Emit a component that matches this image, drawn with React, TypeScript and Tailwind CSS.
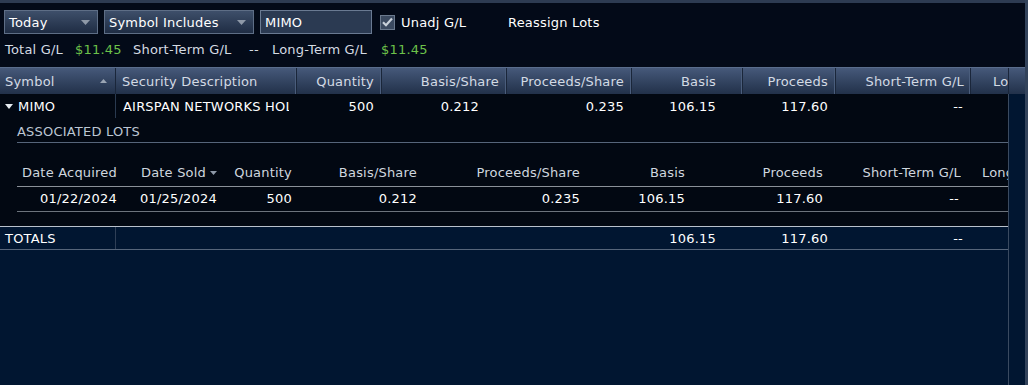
import React from "react";

const F = "[font-family:'DejaVu_Sans',sans-serif] text-[13px] tracking-[0.2px]";

function HeadCell({ w, children, align = "right", pr = "pr-[7px]", last = false }: { w: string; children?: React.ReactNode; align?: "left" | "right"; pr?: string; last?: boolean }) {
  return (
    <div
      className={`${w} h-full flex items-center shrink-0 overflow-hidden whitespace-nowrap ${align === "right" ? "justify-end " + pr : "justify-start pl-[6px]"} ${last ? "" : "border-r border-r-[#1a263a] shadow-[inset_-2px_0_0_-1px_#4a5d7c]"}`}
    >
      {children}
    </div>
  );
}

function Cell({ w, children, right = true, pr = "pr-[8px]", pl = "pl-0", extra = "" }: { w: string; children?: React.ReactNode; right?: boolean; pr?: string; pl?: string; extra?: string }) {
  return (
    <div className={`${w} shrink-0 flex items-center overflow-hidden whitespace-nowrap ${right ? "justify-end " + pr : "justify-start " + pl} ${extra}`}>
      {children}
    </div>
  );
}

function Dropdown({ w, label }: { w: string; label: string }) {
  return (
    <div className={`${w} h-[24px] border border-[#5e6e86] bg-gradient-to-b from-[#3e4f6a] to-[#1f2d44] flex items-center justify-between pl-[4px] pr-[7px] text-white`}>
      <span>{label}</span>
      <svg width="9" height="5" viewBox="0 0 9 5"><path d="M0 0h9L4.5 5z" fill="#8e99a8" /></svg>
    </div>
  );
}

export default function App() {
  return (
    <div className={`w-[1028px] h-[385px] flex bg-[#011631] ${F} leading-none`}>
      <div className="w-[1025px] flex flex-col">
        <div className="h-[3px] bg-[#2d3b52]" />
        {/* toolbar */}
        <div className="h-[64px] bg-[#030a18] flex flex-col">
          <div className="pt-[7px] pl-[4px] flex items-center h-[31px]">
            <Dropdown w="w-[94px]" label="Today" />
            <div className="w-[6px]" />
            <Dropdown w="w-[150px]" label="Symbol Includes" />
            <div className="w-[6px]" />
            <div className="w-[112px] h-[24px] border border-[#6a7a92] bg-[#2b3a52] flex items-center pl-[4px] text-white">MIMO</div>
            <div className="w-[8px]" />
            <div className="w-[15px] h-[15px] border border-[#6b7a8e] bg-[#3b4a60] flex items-center justify-center">
              <svg width="11" height="10" viewBox="0 0 11 10"><path d="M1 5.2l3 3L10 1.5" stroke="#c9d1da" strokeWidth="2.2" fill="none" /></svg>
            </div>
            <span className="ml-[6px] w-[107px] text-white whitespace-nowrap">Unadj G/L</span>
            <span className="text-white whitespace-nowrap">Reassign Lots</span>
          </div>
          <div className="h-[18px] mt-[6px] pl-[5px] flex items-center text-[#d5dbe3] whitespace-nowrap">
            <span className="w-[70px] shrink-0">Total G/L</span>
            <span className="w-[58px] shrink-0 text-[#6cc24a]">$11.45</span>
            <span className="w-[116px] shrink-0">Short-Term G/L</span>
            <span className="w-[23px] shrink-0">--</span>
            <span className="w-[109px] shrink-0">Long-Term G/L</span>
            <span className="text-[#6cc24a]">$11.45</span>
          </div>
        </div>
        {/* header */}
        <div className="h-[27px] flex bg-gradient-to-b from-[#46597a] to-[#22314a] border-t border-t-[#5a6d8c] text-[#d3dae4]">
          <div className="w-[116px] h-full shrink-0 flex items-center justify-between pl-[5px] pr-[8px] border-r border-r-[#1a263a]">
            <span>Symbol</span>
            <svg width="7" height="4" viewBox="0 0 7 4"><path d="M0 4h7L3.5 0z" fill="#9aa5b4" /></svg>
          </div>
          <HeadCell w="w-[181px]" align="left">Security Description</HeadCell>
          <HeadCell w="w-[85px]">Quantity</HeadCell>
          <HeadCell w="w-[125px]">Basis/Share</HeadCell>
          <HeadCell w="w-[125px]">Proceeds/Share</HeadCell>
          <HeadCell w="w-[111px]" pr="pr-[26px]">Basis</HeadCell>
          <HeadCell w="w-[93px]">Proceeds</HeadCell>
          <HeadCell w="w-[135px]" pr="pr-[6px]">Short-Term G/L</HeadCell>
          <div className="w-[38px] h-full shrink-0 overflow-hidden flex items-center pl-[22px] border-r border-r-[#1a263a] whitespace-nowrap">Long-Term G/L</div>
          <div className="w-[16px] h-full shrink-0" />
        </div>
        {/* body */}
        <div className="flex-1 flex">
          <div className="w-[1008px] flex flex-col">
            <div className="bg-[#020812] flex flex-col text-white">
              {/* main row */}
              <div className="h-[24px] flex">
                <div className="w-[116px] shrink-0 flex items-center pl-[5px] border-r border-r-[#2a3a50]">
                  <svg width="8" height="5" viewBox="0 0 8 5"><path d="M0 0h8L4 5z" fill="#e6ebf0" /></svg>
                  <span className="ml-[5px]">MIMO</span>
                </div>
                <Cell w="w-[173px]" right={false} pl="pl-[7px]">AIRSPAN NETWORKS HOLDINGS</Cell>
                <div className="w-[8px] shrink-0" />
                <Cell w="w-[85px]">500</Cell>
                <Cell w="w-[125px]" pr="pr-[28px]">0.212</Cell>
                <Cell w="w-[125px]">0.235</Cell>
                <Cell w="w-[111px]" pr="pr-[27px]">106.15</Cell>
                <Cell w="w-[93px]">117.60</Cell>
                <Cell w="w-[135px]" pr="pr-[8px]">--</Cell>
              </div>
              {/* associated lots */}
              <div className="ml-[17px] h-[25px] border-b border-b-[#56657a] flex items-center text-[#bcc6d2] pt-[3px]">ASSOCIATED LOTS</div>
              <div className="h-[16px]" />
              <div className="ml-[17px] h-[28px] border-b border-b-[#8a9098] flex text-[#cfd6df] pb-[1px]">
                <Cell w="w-[100px]" pr="pr-0">Date Acquired</Cell>
                <Cell w="w-[100px]" pr="pr-0">
                  <span>Date Sold</span>
                  <svg className="ml-[4px] mt-[2px]" width="7" height="4" viewBox="0 0 7 4"><path d="M0 0h7L3.5 4z" fill="#8e99a8" /></svg>
                </Cell>
                <Cell w="w-[75px]" pr="pr-0">Quantity</Cell>
                <Cell w="w-[125px]" pr="pr-0">Basis/Share</Cell>
                <Cell w="w-[163px]" pr="pr-0">Proceeds/Share</Cell>
                <Cell w="w-[105px]" pr="pr-0">Basis</Cell>
                <Cell w="w-[138px]" pr="pr-0">Proceeds</Cell>
                <Cell w="w-[138px]" pr="pr-0">Short-Term G/L</Cell>
                <Cell w="w-[47px]" right={false} pl="pl-[21px]">Long-Term G/L</Cell>
              </div>
              <div className="ml-[17px] h-[25px] border-b border-b-[#6c737c] flex pb-[1px]">
                <Cell w="w-[100px]" pr="pr-0">01/22/2024</Cell>
                <Cell w="w-[100px]" pr="pr-0">01/25/2024</Cell>
                <Cell w="w-[75px]" pr="pr-0">500</Cell>
                <Cell w="w-[125px]" pr="pr-0">0.212</Cell>
                <Cell w="w-[163px]" pr="pr-0">0.235</Cell>
                <Cell w="w-[105px]" pr="pr-0">106.15</Cell>
                <Cell w="w-[138px]" pr="pr-0">117.60</Cell>
                <Cell w="w-[138px]" pr="pr-[2px]">--</Cell>
              </div>
              <div className="h-[14px]" />
            </div>
            {/* totals */}
            <div className="h-[24px] flex border-t border-t-[#b9c1cc] border-b border-b-[#56657a] text-white">
              <div className="w-[116px] shrink-0 flex items-center pl-[5px] border-r border-r-[#2f3f56]">TOTALS</div>
              <div className="w-[181px] shrink-0" />
              <div className="w-[85px] shrink-0" />
              <div className="w-[125px] shrink-0" />
              <div className="w-[125px] shrink-0" />
              <Cell w="w-[111px]" pr="pr-[27px]">106.15</Cell>
              <Cell w="w-[93px]">117.60</Cell>
              <Cell w="w-[135px]" pr="pr-[8px]">--</Cell>
            </div>
          </div>
          <div className="w-[1px] bg-[#3a4a60]" />
          <div className="w-[16px]" />
        </div>
      </div>
      <div className="w-[3px] bg-[#33435b]" />
    </div>
  );
}
